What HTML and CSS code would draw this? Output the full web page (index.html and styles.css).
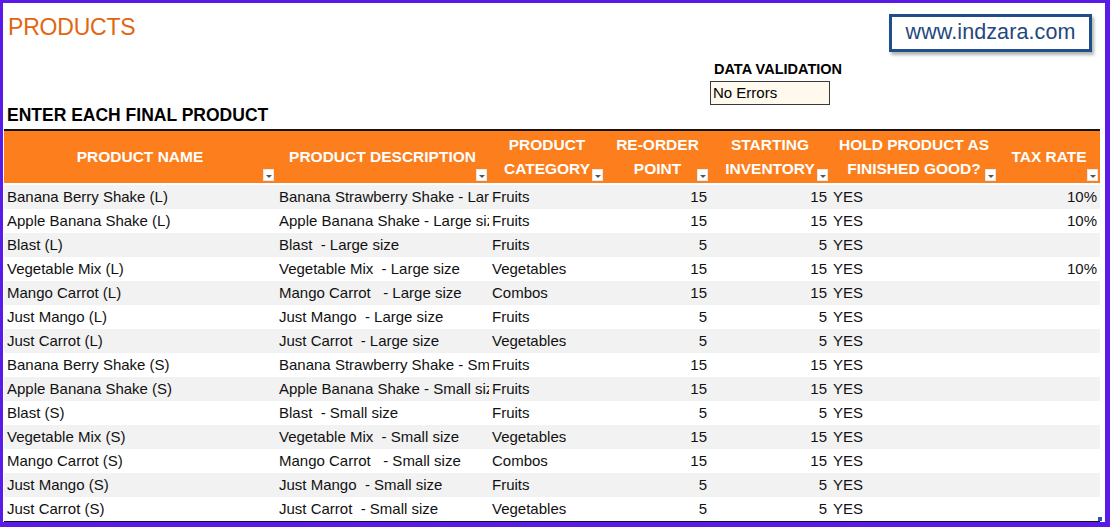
FILE: index.html
```html
<!DOCTYPE html>
<html lang="en">
<head>
<meta charset="utf-8">
<title>Products</title>
<link rel="stylesheet" href="styles.css">
</head>
<body>
<div class="frame">
  <header class="top">
    <div class="top-left">
      <h1 class="title">PRODUCTS</h1>
      <h2 class="subtitle">ENTER EACH FINAL PRODUCT</h2>
    </div>
    <div class="validation">
      <div class="validation-label">DATA VALIDATION</div>
      <div class="validation-box">No Errors</div>
    </div>
    <div class="brand-col">
      <div class="brand">www.indzara.com</div>
    </div>
  </header>

  <table class="sheet">
    <colgroup>
      <col class="c1"><col class="c2"><col class="c3"><col class="c4"><col class="c5"><col class="c6"><col class="c7">
    </colgroup>
    <thead>
      <tr>
        <th>PRODUCT NAME<span class="filter"></span></th>
        <th>PRODUCT DESCRIPTION<span class="filter"></span></th>
        <th>PRODUCT<br>CATEGORY<span class="filter"></span></th>
        <th>RE-ORDER<br>POINT<span class="filter"></span></th>
        <th>STARTING<br>INVENTORY<span class="filter"></span></th>
        <th>HOLD PRODUCT AS<br>FINISHED GOOD?<span class="filter"></span></th>
        <th>TAX RATE<span class="filter"></span></th>
      </tr>
    </thead>
    <tbody>
      <tr><td>Banana Berry Shake (L)</td><td>Banana Strawberry Shake - Large size</td><td>Fruits</td><td class="num">15</td><td class="num">15</td><td>YES</td><td class="num">10%</td></tr>
      <tr><td>Apple Banana Shake (L)</td><td>Apple Banana Shake - Large size</td><td>Fruits</td><td class="num">15</td><td class="num">15</td><td>YES</td><td class="num">10%</td></tr>
      <tr><td>Blast (L)</td><td>Blast  - Large size</td><td>Fruits</td><td class="num">5</td><td class="num">5</td><td>YES</td><td class="num"></td></tr>
      <tr><td>Vegetable Mix (L)</td><td>Vegetable Mix  - Large size</td><td>Vegetables</td><td class="num">15</td><td class="num">15</td><td>YES</td><td class="num">10%</td></tr>
      <tr><td>Mango Carrot (L)</td><td>Mango Carrot   - Large size</td><td>Combos</td><td class="num">15</td><td class="num">15</td><td>YES</td><td class="num"></td></tr>
      <tr><td>Just Mango (L)</td><td>Just Mango  - Large size</td><td>Fruits</td><td class="num">5</td><td class="num">5</td><td>YES</td><td class="num"></td></tr>
      <tr><td>Just Carrot (L)</td><td>Just Carrot  - Large size</td><td>Vegetables</td><td class="num">5</td><td class="num">5</td><td>YES</td><td class="num"></td></tr>
      <tr><td>Banana Berry Shake (S)</td><td>Banana Strawberry Shake - Small size</td><td>Fruits</td><td class="num">15</td><td class="num">15</td><td>YES</td><td class="num"></td></tr>
      <tr><td>Apple Banana Shake (S)</td><td>Apple Banana Shake - Small size</td><td>Fruits</td><td class="num">15</td><td class="num">15</td><td>YES</td><td class="num"></td></tr>
      <tr><td>Blast (S)</td><td>Blast  - Small size</td><td>Fruits</td><td class="num">5</td><td class="num">5</td><td>YES</td><td class="num"></td></tr>
      <tr><td>Vegetable Mix (S)</td><td>Vegetable Mix  - Small size</td><td>Vegetables</td><td class="num">15</td><td class="num">15</td><td>YES</td><td class="num"></td></tr>
      <tr><td>Mango Carrot (S)</td><td>Mango Carrot   - Small size</td><td>Combos</td><td class="num">15</td><td class="num">15</td><td>YES</td><td class="num"></td></tr>
      <tr><td>Just Mango (S)</td><td>Just Mango  - Small size</td><td>Fruits</td><td class="num">5</td><td class="num">5</td><td>YES</td><td class="num"></td></tr>
      <tr><td>Just Carrot (S)</td><td>Just Carrot  - Small size</td><td>Vegetables</td><td class="num">5</td><td class="num">5</td><td>YES</td><td class="num"></td></tr>
    </tbody>
  </table>
</div>
</body>
</html>
```
FILE: styles.css
```css
* { box-sizing: border-box; }

html, body {
  margin: 0;
  padding: 0;
  background: #5a1ae8;
}

body {
  font-family: "Liberation Sans", Arial, sans-serif;
  color: #111;
}

.frame {
  position: relative;
  width: 1110px;
  height: 527px;
  background: #fff;
  border-style: solid;
  border-color: #5a1ae8;
  border-width: 3px 5px 5px 3px;
  overflow: hidden;
}

/* ---------- top area ---------- */
.top {
  display: grid;
  grid-template-columns: 707px 120px 1fr;
  height: 126px;
}

.top-left {
  display: flex;
  flex-direction: column;
  justify-content: space-between;
  padding: 11px 0 4px 4px;
}

.title {
  margin: 0;
  font-weight: 400;
  font-size: 23px;
  line-height: 27px;
  letter-spacing: -0.2px;
  color: #e2660f;
  padding-left: 1px;
}

.subtitle {
  margin: 0;
  font-weight: 700;
  font-size: 17.5px;
  line-height: 20px;
  color: #000;
}

.validation {
  padding-top: 57px;
}

.validation-label {
  font-weight: 700;
  font-size: 14.5px;
  line-height: 18px;
  padding-left: 4px;
  white-space: nowrap;
  color: #000;
}

.validation-box {
  margin-top: 3px;
  height: 24px;
  border: 1px solid #3a3a3a;
  background: #fff9ee;
  font-size: 15px;
  line-height: 22px;
  padding-left: 2px;
  color: #000;
}

.brand-col {
  padding: 11px 0 0 59px;
}

.brand {
  width: 203px;
  height: 38px;
  border: 3px solid #1f4e8c;
  box-shadow: 2px 3px 3px rgba(0, 0, 0, 0.3);
  color: #1f497d;
  font-size: 21.5px;
  line-height: 31px;
  text-align: center;
  letter-spacing: 0.1px;
}

/* ---------- table ---------- */
.sheet {
  margin-left: 1px;
  width: 1096px;
  table-layout: fixed;
  border-collapse: collapse;
  border-top: 2px solid #141414;
  border-bottom: 2px solid #141414;
}

.c1 { width: 272px; }
.c2 { width: 213px; }
.c3 { width: 116px; }
.c4 { width: 105px; }
.c5 { width: 120px; }
.c6 { width: 168px; }
.c7 { width: 102px; }

.sheet thead tr {
  height: 54px;
}

.sheet th {
  position: relative;
  background: #fc7e1c;
  color: #fff;
  font-weight: 700;
  font-size: 15.5px;
  line-height: 24px;
  text-align: center;
  vertical-align: middle;
  padding: 0 0 1px 0;
  border-bottom: 2px solid #fff;
  white-space: nowrap;
}

.filter {
  position: absolute;
  right: 2px;
  bottom: 2px;
  width: 11px;
  height: 12px;
  background: #fff;
  border: 1px solid #e8e8e8;
}

.filter::after {
  content: "";
  position: absolute;
  left: 2px;
  top: 5px;
  border-left: 3px solid transparent;
  border-right: 3px solid transparent;
  border-top: 3px solid #555;
}

.sheet tbody tr {
  height: 24px;
}

.sheet tbody tr:nth-child(odd) {
  background: #f2f2f2;
}

.sheet td {
  padding: 0 3px;
  font-size: 15px;
  line-height: 24px;
  white-space: pre;
  overflow: hidden;
  color: #111;
}

.sheet td.num {
  text-align: right;
}

.frame::after {
  content: "";
  position: absolute;
  left: 1095px;
  top: 514px;
  width: 4px;
  height: 4px;
  background: #2a56b8;
}
```
